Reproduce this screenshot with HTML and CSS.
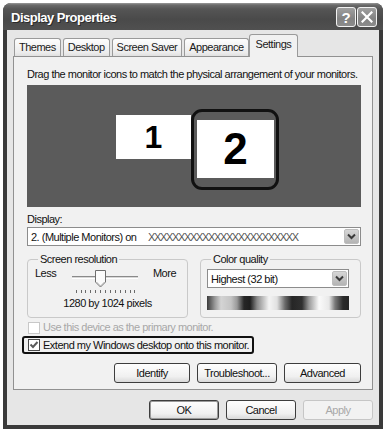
FILE: index.html
```html
<!DOCTYPE html>
<html>
<head>
<meta charset="utf-8">
<title>Display Properties</title>
<link rel="stylesheet" href="styles.css">
</head>
<body>
<div class="window">
  <div class="titlebar">
    <span class="title">Display Properties</span>
    <div class="caption-btns">
      <span class="cbtn help">?</span>
      <span class="cbtn close"><svg width="12" height="12" viewBox="0 0 12 12"><path d="M1.5 1.5 L10.5 10.5 M10.5 1.5 L1.5 10.5" stroke="#fff" stroke-width="2.2" stroke-linecap="square"/></svg></span>
    </div>
  </div>
  <div class="client">
    <div class="tabs">
      <div class="tab">Themes</div>
      <div class="tab">Desktop</div>
      <div class="tab">Screen Saver</div>
      <div class="tab">Appearance</div>
      <div class="tab active">Settings</div>
    </div>
    <div class="panel">
      <p class="hint">Drag the monitor icons to match the physical arrangement of your monitors.</p>
      <div class="arrange">
        <div class="mon mon1">1</div>
        <div class="mon-sel"><div class="mon mon2">2</div></div>
      </div>
      <div class="lbl">Display:</div>
      <div class="combo">
        <span class="combo-text">2. (Multiple Monitors) on <span class="mask">XXXXXXXXXXXXXXXXXXXXXXXXX</span></span>
        <span class="drop"><svg width="9" height="7" viewBox="0 0 9 7"><path d="M1 1.5 L4.5 5 L8 1.5" fill="none" stroke="#3a3a3a" stroke-width="2"/></svg></span>
      </div>
      <div class="groups">
        <fieldset class="group">
          <legend>Screen resolution</legend>
          <div class="res-row">
            <span>Less</span>
            <div class="slider">
              <div class="track-area">
                <div class="track"></div>
                <svg class="thumb" width="11" height="18" viewBox="0 0 11 18"><path d="M0.5 0.5 H10.5 V12 L5.5 17 L0.5 12 Z" fill="#fbfbfb" stroke="#6e6e6e"/><path d="M1.5 12 L5.5 16 L9.5 12" fill="none" stroke="#b5b5b5"/></svg>
              </div>
              <div class="ticks"><i></i><i></i><i></i><i></i><i></i><i></i><i></i><i></i><i></i><i></i><i></i><i></i><i></i></div>
            </div>
            <span>More</span>
          </div>
          <div class="res-value">1280 by 1024 pixels</div>
        </fieldset>
        <fieldset class="group">
          <legend>Color quality</legend>
          <div class="combo small">
            <span class="combo-text">Highest (32 bit)</span>
            <span class="drop"><svg width="9" height="7" viewBox="0 0 9 7"><path d="M1 1.5 L4.5 5 L8 1.5" fill="none" stroke="#3a3a3a" stroke-width="2"/></svg></span>
          </div>
          <div class="colorbar"></div>
        </fieldset>
      </div>
      <div class="check disabled"><span class="box"></span><span>Use this device as the primary monitor.</span></div>
      <div class="check focus"><span class="box"><svg width="10" height="10" viewBox="0 0 10 10"><path d="M1.5 4.5 L4 7 L8.5 2" fill="none" stroke="#5a5a5a" stroke-width="2"/></svg></span><span>Extend my Windows desktop onto this monitor.</span></div>
      <div class="panel-btns">
        <button class="btn b-identify">Identify</button>
        <button class="btn b-trouble">Troubleshoot...</button>
        <button class="btn b-adv">Advanced</button>
      </div>
    </div>
    <div class="footer">
      <button class="btn default">OK</button>
      <button class="btn">Cancel</button>
      <button class="btn" disabled>Apply</button>
    </div>
  </div>
</div>
</body>
</html>
```
FILE: styles.css
```css
* { box-sizing: border-box; }
html, body { margin: 0; padding: 0; background: #fff; }
body {
  font-family: "Liberation Sans", Arial, sans-serif;
  font-size: 11px;
  letter-spacing: -0.5px;
  color: #111;
  white-space: nowrap;
}
.window {
  margin: 3px 0 0 3px;
  width: 380px;
  height: 426px;
  background: #3a3a3a;
  border-radius: 8px 8px 0 0;
  display: flex;
  flex-direction: column;
}
.titlebar {
  height: 27px;
  flex: none;
  display: flex;
  align-items: center;
  justify-content: space-between;
  padding: 0 6px 0 8px;
  border-radius: 8px 8px 0 0;
  background: linear-gradient(#9a9a9a 0, #6a6a6a 2px, #555 6px, #4a4a4a 60%, #505050 100%);
}
.title {
  color: #fff;
  font-weight: bold;
  font-size: 13px;
  letter-spacing: -0.5px;
  text-shadow: 1px 1px 0 #2a2a2a;
  padding-top: 1px;
}
.caption-btns { display: flex; gap: 1px; padding-top: 1px; }
.cbtn {
  width: 20px;
  height: 20px;
  border: 1px solid #f2f2f2;
  border-radius: 3px;
  background: linear-gradient(#a0a0a0, #828282 60%, #8c8c8c);
  color: #fff;
  font-weight: bold;
  font-size: 15px;
  letter-spacing: 0;
  display: flex;
  align-items: center;
  justify-content: center;
  line-height: 1;
}
.client {
  flex: 1;
  margin: 0 4px 4px;
  background: #e6e6e6;
  display: flex;
  flex-direction: column;
}
.tabs {
  height: 26px;
  flex: none;
  display: flex;
  align-items: flex-end;
  gap: 2px;
  padding-left: 7px;
}
.tab {
  height: 18px;
  padding: 0 4px;
  border: 1px solid #9a9a9a;
  border-bottom: none;
  border-radius: 3px 3px 0 0;
  background: linear-gradient(#fdfdfd, #ececec 80%, #e0e0e0);
  line-height: 17px;
  color: #1a1a1a;
}
.tab.active {
  height: 23px;
  margin: 0 -2px -1px -2px;
  padding: 0 6px;
  line-height: 19px;
  background: #f1f1f1;
  position: relative;
  z-index: 1;
}
.panel {
  margin: 0 6px 0 6px;
  height: 334px;
  flex: none;
  border: 1px solid #919191;
  background: #f1f1f1;
  padding: 11px 11px 0 13px;
  display: flex;
  flex-direction: column;
}
.hint { margin: 0; line-height: 13px; }
.arrange {
  margin-top: 4px;
  height: 122px;
  background: #5b5b5b;
  position: relative;
  flex: none;
}
.mon {
  background: #fff;
  color: #000;
  font-weight: bold;
  display: flex;
  align-items: center;
  justify-content: center;
  letter-spacing: 0;
}
.mon1 {
  position: absolute;
  left: 89px;
  top: 30px;
  width: 75px;
  height: 44px;
  font-size: 32px;
}
.mon-sel {
  position: absolute;
  left: 164px;
  top: 24px;
  width: 88px;
  height: 81px;
  border: 3px solid #111;
  border-radius: 11px;
  padding: 8px 0 0 3px;
}
.mon2 {
  width: 77px;
  height: 58px;
  font-size: 44px;
}
.lbl { margin-top: 6px; line-height: 13px; }
.combo {
  margin-top: 1px;
  height: 19px;
  flex: none;
  border: 1px solid #8c8c8c;
  background: #fff;
  display: flex;
  align-items: center;
  justify-content: space-between;
  padding: 0 1px 0 3px;
}
.mask { letter-spacing: -1.35px; color: #555; margin-left: 9px; }
.drop {
  width: 15px;
  height: 15px;
  border-radius: 2px;
  border: 1px solid #bdbdbd;
  background: linear-gradient(#d6d6d6, #b4b4b4);
  display: flex;
  align-items: center;
  justify-content: center;
}
.groups {
  margin-top: 7px;
  display: grid;
  grid-template-columns: 161px 161px;
  gap: 12px;
}
.group {
  margin: 0;
  padding: 0 11px 0 6px;
  height: 65px;
  border: 1px solid #c9c9c9;
  border-radius: 4px;
  min-width: 0;
}
.group legend {
  padding: 0 2px;
  margin-left: 4px;
  line-height: 13px;
}
.res-row {
  margin-top: 1px;
  display: flex;
  justify-content: space-between;
  align-items: flex-start;
  padding-left: 1px;
  line-height: 13px;
}
.slider { width: 66px; }
.track-area { position: relative; height: 20px; }
.track {
  position: absolute;
  left: 0;
  right: 0;
  top: 9px;
  height: 3px;
  border-top: 1px solid #8a8a8a;
  border-bottom: 1px solid #fff;
  background: #d8d8d8;
}
.thumb { position: absolute; left: 23px; top: 3px; }
.ticks {
  margin: 3px 2px 0 4px;
  height: 3px;
  display: flex;
  justify-content: space-between;
}
.ticks i { width: 1px; background: #6a6a6a; }
.res-value { margin-top: 4px; text-align: center; line-height: 13px; padding-left: 5px; }
.combo.small { margin-top: 3px; }
.colorbar {
  margin-top: 8px;
  height: 14px;
  background: linear-gradient(to right,
    #3a3a3a 0px, #9a9a9a 8px, #d4d4d4 14px, #c4c4c4 24px, #9a9a9a 30px, #262626 37px, #1e1e1e 43px,
    #8a8a8a 50px, #f4f4f4 62px, #e0e0e0 70px, #6a6a6a 78px, #262626 85px, #303030 95px,
    #9a9a9a 102px, #fafafa 112px, #e8e8e8 122px, #7a7a7a 128px, #2a2a2a 136px, #222 145px);
}
.check {
  display: flex;
  align-items: center;
  gap: 3px;
  line-height: 13px;
}
.check .box {
  width: 12px;
  height: 12px;
  border: 1px solid #4a4a4a;
  background: #fff;
  display: flex;
  align-items: center;
  justify-content: center;
  flex: none;
}
.check.disabled { margin-top: 3px; padding-left: 1px; color: #a8a8a8; }
.check.disabled .box { border-color: #c8c8c8; }
.check.focus {
  align-self: flex-start;
  margin: 2px 0 0 -5px;
  height: 18px;
  border: 2px solid #111;
  border-radius: 3px;
  padding: 0 3px 0 4px;
}
.panel-btns {
  margin-top: 9px;
  display: flex;
  justify-content: flex-end;
  gap: 7px;
}
.btn {
  font: inherit;
  letter-spacing: inherit;
  color: #111;
  height: 20px;
  width: 70px;
  padding: 0;
  border: 1px solid #3d3d3d;
  border-radius: 3px;
  background: linear-gradient(#fefefe, #f0f0f0 70%, #d9d9d9);
}
.b-identify { width: 76px; }
.b-trouble { width: 80px; }
.b-adv { width: 77px; }
.btn.default { box-shadow: inset 0 0 0 1px #9a9a9a; }
.btn:disabled { color: #a8a8a8; border-color: #c6c6c6; background: #f2f2f2; }
.footer {
  margin-top: 10px;
  display: flex;
  justify-content: flex-end;
  gap: 7px;
  padding-right: 6px;
}
```
